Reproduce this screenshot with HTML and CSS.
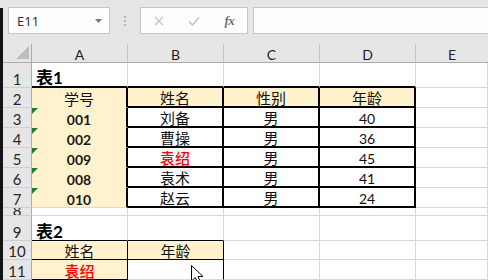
FILE: index.html
```html
<!DOCTYPE html>
<html lang="zh-CN">
<head>
<meta charset="utf-8">
<title>Sheet</title>
<link rel="stylesheet" href="styles.css">
</head>
<body>
<div class="edge"></div>
<div class="main">
  <div class="toolbar">
    <div class="namebox"><span>E11</span><svg class="dd" width="7" height="4" viewBox="0 0 7 4"><path d="M0 0H7L3.5 4Z" fill="#7a7a7a"/></svg></div>
    <div class="dots"><i></i><i></i><i></i></div>
    <div class="fxbox">
      <span class="ic"><svg width="10" height="10" viewBox="0 0 10 10"><path d="M1 1L9 9M9 1L1 9" stroke="#c4c4c4" stroke-width="1.3" fill="none"/></svg></span>
      <span class="ic"><svg width="12" height="10" viewBox="0 0 12 10"><path d="M1 5.5L4.5 9L11 1.5" stroke="#c4c4c4" stroke-width="1.6" fill="none"/></svg></span>
      <span class="ic fx">fx</span>
    </div>
    <div class="input"></div>
  </div>
  <div class="sheet">
    <div class="corner"><svg width="13" height="13" viewBox="0 0 13 13"><path d="M13 0V13H0Z" fill="#bdbdbd"/></svg></div>
    <div class="ch">A</div><div class="ch">B</div><div class="ch">C</div><div class="ch">D</div><div class="ch last">E</div>

    <div class="rh">1</div>
    <div class="c title tb">表1</div><div class="c tb"></div><div class="c tb"></div><div class="c tb"></div><div class="c"></div>

    <div class="rh">2</div>
    <div class="c y tr ya">学号</div><div class="c y tr tb">姓名</div><div class="c y tr tb">性别</div><div class="c y tr tb">年龄</div><div class="c"></div>

    <div class="rh">3</div>
    <div class="c y tr ya flag num id">001</div><div class="c tr tb">刘备</div><div class="c tr tb">男</div><div class="c tr tb num">40</div><div class="c"></div>

    <div class="rh">4</div>
    <div class="c y tr ya flag num id">002</div><div class="c tr tb">曹操</div><div class="c tr tb">男</div><div class="c tr tb num">36</div><div class="c"></div>

    <div class="rh">5</div>
    <div class="c y tr ya flag num id">009</div><div class="c tr tb red">袁绍</div><div class="c tr tb">男</div><div class="c tr tb num">45</div><div class="c"></div>

    <div class="rh">6</div>
    <div class="c y tr ya flag num id">008</div><div class="c tr tb">袁术</div><div class="c tr tb">男</div><div class="c tr tb num">41</div><div class="c"></div>

    <div class="rh">7</div>
    <div class="c y tr flag num id">010</div><div class="c tr tb">赵云</div><div class="c tr tb">男</div><div class="c tr tb num">24</div><div class="c"></div>

    <div class="rh short">8</div>
    <div class="c"></div><div class="c"></div><div class="c"></div><div class="c"></div><div class="c"></div>

    <div class="rh">9</div>
    <div class="c title bb">表2</div><div class="c bb"></div><div class="c"></div><div class="c"></div><div class="c"></div>

    <div class="rh">10</div>
    <div class="c y br bb">姓名</div><div class="c y br bb">年龄</div><div class="c"></div><div class="c"></div><div class="c"></div>

    <div class="rh">11</div>
    <div class="c y br bb red">袁绍</div><div class="c br"></div><div class="c"></div><div class="c"></div><div class="c"></div>
  </div>
</div>
<svg class="cursor" width="14" height="20" viewBox="0 0 14 20"><path d="M0.5 0.5V16L4.3 12.4L7 18.6L9.6 17.5L7 11.5H12Z" fill="#fff" stroke="#000" stroke-width="1" stroke-linejoin="round"/></svg>
</body>
</html>
```

FILE: styles.css
```css
html, body {
  margin: 0;
  padding: 0;
}
body {
  width: 488px;
  height: 280px;
  overflow: hidden;
  background: #e6e6e6;
  display: flex;
  position: relative;
  font-family: Lato, "Noto Sans CJK SC", sans-serif;
}
.edge {
  width: 3px;
  flex: none;
  background: #141414;
  margin-top: 8px;
}
.main {
  flex: 1;
  min-width: 0;
  display: flex;
  flex-direction: column;
}
.toolbar {
  height: 44px;
  flex: none;
  box-sizing: border-box;
  padding-top: 7px;
  display: flex;
  align-items: flex-start;
}
.namebox {
  margin-left: 5px;
  width: 102px;
  height: 27px;
  box-sizing: border-box;
  border: 1px solid #c6c6c6;
  background: #fdfdfd;
  display: flex;
  align-items: center;
  justify-content: space-between;
  padding: 0 7px 0 8px;
  font: 13px "Noto Sans", sans-serif;
  color: #333;
}
.dots {
  width: 30px;
  height: 27px;
  display: flex;
  flex-direction: column;
  align-items: center;
  justify-content: center;
  gap: 2px;
}
.dots i {
  display: block;
  width: 2px;
  height: 2px;
  background: #b4b4b4;
}
.fxbox {
  width: 108px;
  height: 27px;
  box-sizing: border-box;
  border: 1px solid #c6c6c6;
  background: #fdfdfd;
  display: flex;
}
.ic {
  width: 36px;
  display: flex;
  align-items: center;
  justify-content: center;
}
.fx {
  font: italic bold 13px "Liberation Serif", serif;
  color: #6f6f6f;
  letter-spacing: -0.5px;
}
.input {
  flex: 1;
  margin-left: 5px;
  margin-right: -4px;
  height: 27px;
  box-sizing: border-box;
  border: 1px solid #c6c6c6;
  background: #fdfdfd;
}
.sheet {
  flex: 1;
  display: grid;
  grid-template-columns: 29px 96px 96px 96px 96px 72px;
  grid-template-rows: 19px 25px repeat(6, 20px) 8px 25px 19px 20px;
  background: #fff;
}
.sheet > div {
  box-sizing: border-box;
  min-width: 0;
  overflow: hidden;
}
.corner {
  background: #e6e6e6;
  border-right: 1px solid #ababab;
  border-bottom: 1px solid #ababab;
  display: flex;
  align-items: flex-end;
  justify-content: flex-end;
  padding: 0 2px 3px 0;
}
.ch {
  background: #e6e6e6;
  border-bottom: 1px solid #ababab;
  border-right: 1px solid #c4c4c4;
  display: flex;
  align-items: flex-end;
  justify-content: center;
  font-size: 14px;
  line-height: 1;
  color: #1e1e1e;
}
.ch.last {
  border-right: none;
}
.rh {
  background: #e6e6e6;
  border-right: 1px solid #ababab;
  border-bottom: 1px solid #cfcfcf;
  display: flex;
  align-items: flex-end;
  justify-content: center;
  font-size: 15px;
  line-height: 1;
  color: #262626;
}
.rh.short {
  align-items: flex-start;
  line-height: 0.35;
}
.c {
  position: relative;
  border-right: 1px solid #d9d9d9;
  border-bottom: 1px solid #d9d9d9;
  display: flex;
  align-items: flex-end;
  justify-content: center;
  font-size: 15px;
  line-height: 1;
  color: #111;
  white-space: nowrap;
}
.num {
  font-size: 14px;
}
.id {
  font-weight: bold;
  color: #1a1a1a;
}
.title {
  justify-content: flex-start;
  padding-left: 4px;
  font-size: 17px;
  font-weight: bold;
  color: #000;
}
.y {
  background: #fff2cc;
}
.ya {
  border-bottom-color: #fff2cc;
}
.tb {
  border-bottom: 2px solid #000;
}
.tr {
  border-right: 2px solid #000;
}
.bb {
  border-bottom: 1px solid #000;
}
.br {
  border-right: 1px solid #000;
}
.red {
  color: #ff0000;
  font-weight: 500;
}
.flag::before {
  content: "";
  position: absolute;
  left: 0;
  top: 0;
  border-top: 6px solid #1f7a32;
  border-right: 6px solid transparent;
}
.cursor {
  position: absolute;
  left: 191px;
  top: 265px;
}
```
